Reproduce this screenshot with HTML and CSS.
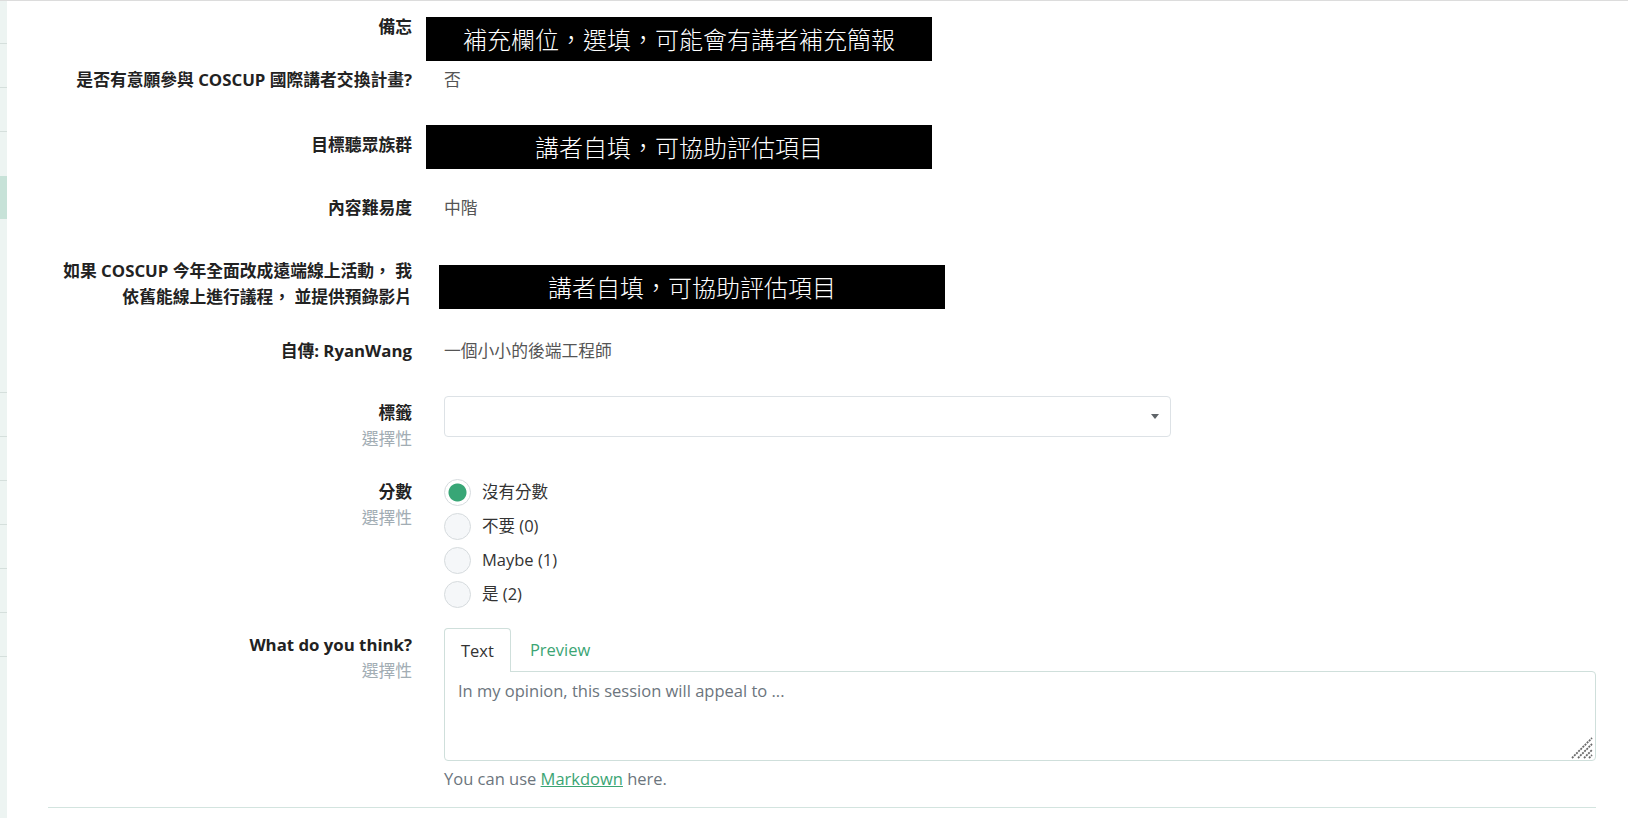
FILE: index.html
```html
<!DOCTYPE html>
<html lang="zh-Hant">
<head>
<meta charset="utf-8">
<title>Review</title>
<link rel="stylesheet" href="styles.css">
</head>
<body>
<div class="topline"></div>
<div class="page">
  <nav class="sidebar">
    <div class="side-item first"></div>
    <div class="side-item"></div>
    <div class="side-item"></div>
    <div class="side-item bare"></div>
    <div class="side-item active"></div>
    <div class="side-item tall"></div>
    <div class="side-item"></div>
    <div class="side-item"></div>
    <div class="side-item"></div>
    <div class="side-item"></div>
    <div class="side-item"></div>
    <div class="side-item"></div>
  </nav>
  <main class="main">
    <div class="field field-a">
      <div class="label">備忘</div>
      <div class="value"><div class="redact redact-a">補充欄位，選填，可能會有講者補充簡報</div></div>
    </div>
    <div class="field field-b">
      <div class="label">是否有意願參與 COSCUP 國際講者交換計畫?</div>
      <div class="value">否</div>
    </div>
    <div class="field field-c">
      <div class="label label-pad7">目標聽眾族群</div>
      <div class="value"><div class="redact">講者自填，可協助評估項目</div></div>
    </div>
    <div class="field field-d">
      <div class="label">內容難易度</div>
      <div class="value">中階</div>
    </div>
    <div class="field field-e">
      <div class="label">如果 COSCUP 今年全面改成遠端線上活動， 我<br>依舊能線上進行議程， 並提供預錄影片</div>
      <div class="value value-pad7"><div class="redact redact-e">講者自填，可協助評估項目</div></div>
    </div>
    <div class="field field-f">
      <div class="label">自傳: RyanWang</div>
      <div class="value">一個小小的後端工程師</div>
    </div>
    <div class="field field-g">
      <div class="label label-pad4">標籤<span class="optional">選擇性</span></div>
      <div class="value">
        <div class="select"><span class="caret"></span></div>
      </div>
    </div>
    <div class="field field-h">
      <div class="label label-pad4">分數<span class="optional">選擇性</span></div>
      <div class="value radios">
        <label class="radio"><span class="radio-dot checked"></span>沒有分數</label>
        <label class="radio"><span class="radio-dot"></span>不要 (0)</label>
        <label class="radio"><span class="radio-dot"></span>Maybe (1)</label>
        <label class="radio"><span class="radio-dot"></span>是 (2)</label>
      </div>
    </div>
    <div class="field field-i">
      <div class="label label-pad4">What do you think?<span class="optional">選擇性</span></div>
      <div class="value value-small">
        <div class="tabs">
          <span class="tab active">Text</span>
          <span class="tab">Preview</span>
        </div>
        <div class="editor-wrap">
          <textarea class="editor" placeholder="In my opinion, this session will appeal to ..."></textarea>
          <svg class="grip" width="22" height="22" viewBox="0 0 22 22" aria-hidden="true">
            <g stroke="#6a6a6a" stroke-width="1.8" stroke-dasharray="2 1" fill="none">
              <line x1="1" y1="21" x2="21" y2="1"/>
              <line x1="7" y1="21" x2="21" y2="7"/>
              <line x1="13" y1="21" x2="21" y2="13"/>
              <line x1="18" y1="21" x2="21" y2="18"/>
            </g>
          </svg>
        </div>
        <p class="help">You can use <a href="#" class="link">Markdown</a> here.</p>
      </div>
    </div>
    <div class="divider"></div>
  </main>
</div>
</body>
</html>
```
FILE: styles.css
```css
* { box-sizing: border-box; }
html, body { margin: 0; padding: 0; background: #fff; }
body {
  font-family: "Open Sans", "Noto Sans CJK JP", sans-serif;
  font-size: 16.5px;
  line-height: 26px;
  color: #212529;
}
.topline { height: 1px; background: #dcdcdc; }
.page { display: flex; min-height: 817px; }

.sidebar {
  width: 7px;
  flex: none;
  background: #edf4f2;
  display: flex;
  flex-direction: column;
}
.side-item { height: 44px; flex: none; border-bottom: 1px solid #d5dfdc; }
.side-item.first { height: 43px; }
.side-item.bare { border-bottom: 0; }
.side-item.active { height: 43px; background: #c7e2d8; border-bottom: 0; }
.side-item.tall { height: 174px; }

.main { flex: 1; padding: 0 32px 0 41px; }

.field {
  display: grid;
  grid-template-columns: 364px 1fr;
  column-gap: 32px;
}
.field-a { margin-top: 13px; }
.field-b { margin-top: 6px; }
.field-c { margin-top: 32px; }
.field-d { margin-top: 26px; }
.field-e { margin-top: 37px; }
.field-f { margin-top: 28px; }
.field-g { margin-top: 32px; }
.field-h { margin-top: 23px; }
.field-i { margin-top: 17px; }

.label { text-align: right; font-weight: 700; color: #222; font-size: 16.8px; }
.label-pad7 { padding-top: 7px; }
.label-pad4 { padding-top: 4px; }
.optional { display: block; font-weight: 400; color: #a2adb4; }

.value { color: #555; font-size: 16.8px; }
.value-small { font-size: 16.5px; }
.value-pad7 { padding-top: 7px; }

.redact {
  width: 506px;
  height: 44px;
  margin-left: -18px;
  background: #000;
  color: #fff;
  font-family: "Noto Sans CJK TC", sans-serif;
  font-weight: 300;
  font-size: 24px;
  line-height: 44px;
  text-align: center;
}
.redact-a { margin-top: 3px; }
.redact-e { margin-left: -5px; }

.select {
  width: 727px;
  height: 41px;
  border: 1px solid #dde2e6;
  border-radius: 4px;
  display: flex;
  align-items: center;
  justify-content: flex-end;
  padding-right: 11px;
}
.caret {
  width: 0;
  height: 0;
  border-left: 4px solid transparent;
  border-right: 4px solid transparent;
  border-top: 5px solid #5f6468;
}

.radios { display: flex; flex-direction: column; font-size: 16.5px; }
.radio {
  display: flex;
  align-items: center;
  height: 34px;
  gap: 11px;
  color: #333;
}
.radio-dot {
  width: 27px;
  height: 27px;
  flex: none;
  border-radius: 50%;
  border: 1px solid #d6dbde;
  background: #f5f7f9;
}
.radio-dot.checked {
  background: radial-gradient(circle, #38a676 0, #38a676 8.5px, #fff 9.5px);
}

.tabs { display: flex; height: 43px; }
.tab {
  display: flex;
  align-items: center;
  padding: 0 18px;
  border: 1px solid transparent;
  border-bottom: 0;
  color: #3ba574;
}
.tab.active {
  position: relative;
  z-index: 1;
  height: 44px;
  padding: 0 16px;
  border-color: #cfdfdb;
  border-radius: 4px 4px 0 0;
  background: #fff;
  color: #333;
}
.editor-wrap { position: relative; }
.editor {
  display: block;
  width: 100%;
  height: 90px;
  margin: 0;
  border: 1px solid #cfdfdb;
  border-radius: 0 4px 4px 4px;
  padding: 6px 13px;
  font-family: inherit;
  font-size: 16.5px;
  line-height: 26px;
  color: #333;
  resize: none;
  outline: none;
}
.editor::placeholder { color: #6c757d; }
.grip { position: absolute; right: 3px; bottom: 2px; }
.help { margin: 5px 0 0; color: #6c757d; }
.link { color: #3ba574; text-decoration: underline; }

.divider { margin-top: 15px; height: 1px; background: #d3e4df; }
```
